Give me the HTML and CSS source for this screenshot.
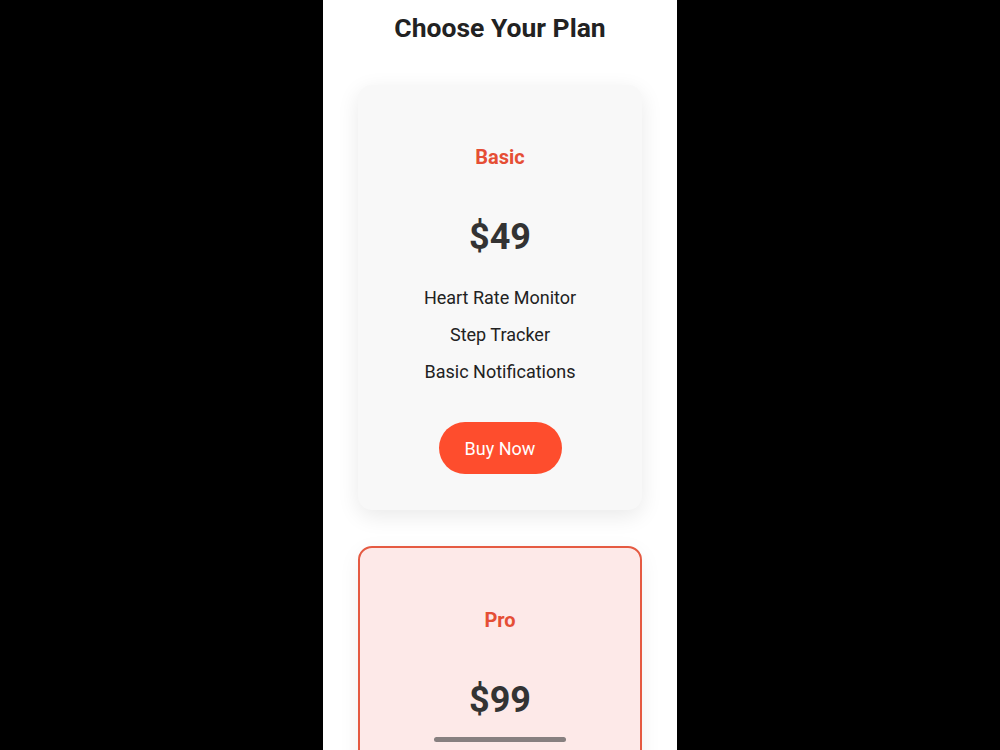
FILE: index.html
```html
<!DOCTYPE html>
<html lang="en">
<head>
<meta charset="utf-8">
<title>Choose Your Plan</title>
<link rel="stylesheet" href="styles.css">
</head>
<body>
<div class="screen">
  <h1 class="title">Choose Your Plan</h1>
  <div class="plans">
    <section class="plan">
      <h2 class="plan-name">Basic</h2>
      <div class="plan-price">$49</div>
      <ul class="features">
        <li>Heart Rate Monitor</li>
        <li>Step Tracker</li>
        <li>Basic Notifications</li>
      </ul>
      <button class="buy">Buy Now</button>
    </section>
    <section class="plan plan-featured">
      <h2 class="plan-name">Pro</h2>
      <div class="plan-price">$99</div>
    </section>
  </div>
  <div class="home-indicator"></div>
</div>
</body>
</html>
```

FILE: styles.css
```css
html, body {
  margin: 0;
  padding: 0;
  background: #000;
  height: 100%;
}

body {
  display: flex;
  justify-content: center;
  font-family: Roboto, "Noto Sans", "Liberation Sans", sans-serif;
}

.screen {
  position: relative;
  width: 354px;
  height: 750px;
  background: #fff;
  overflow: hidden;
}

.title {
  margin: 12px 0 0;
  font-size: 26.5px;
  line-height: 32px;
  font-weight: 700;
  color: #222;
  text-align: center;
}

.plans {
  display: flex;
  flex-direction: column;
  gap: 36px;
  padding: 41px 35px 40px;
}

.plan {
  display: flex;
  flex-direction: column;
  align-items: center;
  background: #f8f8f8;
  border-radius: 14px;
  padding: 60px 20px 36px;
  box-shadow: 0 6px 22px rgba(0, 0, 0, 0.09);
}

.plan-featured {
  min-height: 260px;
  background: #fde9e8;
  border: 2px solid #e55a42;
  box-shadow: 0 6px 22px rgba(0, 0, 0, 0.06);
}

.plan-name {
  margin: 0;
  font-size: 20px;
  line-height: 24px;
  font-weight: 700;
  color: #e54e35;
}

.plan-price {
  margin-top: 46px;
  font-size: 36px;
  line-height: 44px;
  font-weight: 700;
  color: #333;
}

.features {
  list-style: none;
  margin: 20px 0 0;
  padding: 0;
  text-align: center;
}

.features li {
  font-size: 18px;
  line-height: 37px;
  color: #222;
}

.buy {
  margin-top: 32px;
  width: 123px;
  height: 52px;
  border: none;
  border-radius: 26px;
  background: #fe4d2d;
  color: #fff;
  font-family: inherit;
  font-size: 18px;
  cursor: pointer;
}

.home-indicator {
  position: absolute;
  left: 50%;
  bottom: 8px;
  width: 132px;
  height: 5px;
  margin-left: -66px;
  border-radius: 3px;
  background: #878080;
}
```
